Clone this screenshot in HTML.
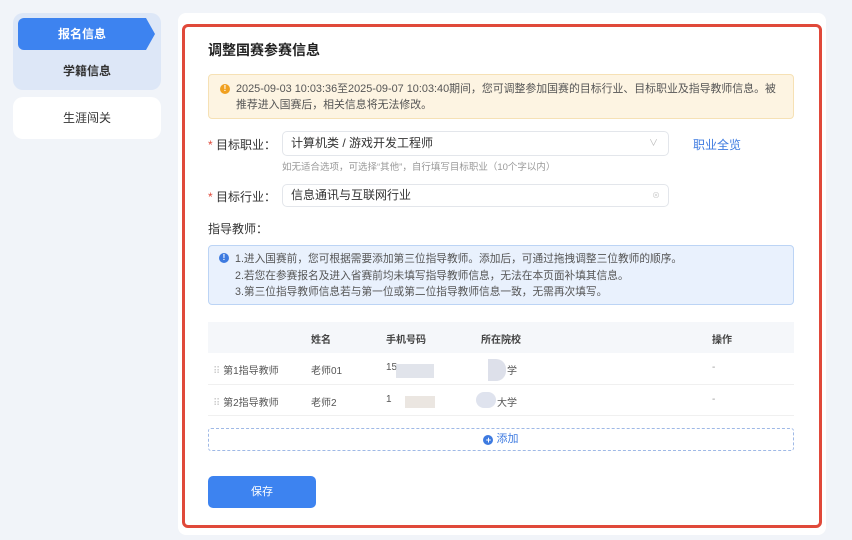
<!DOCTYPE html>
<html><head><meta charset="utf-8"><style>
*{box-sizing:border-box;margin:0;padding:0}
body{width:852px;height:540px;background:#f1f4f9;font-family:"Liberation Sans","Noto Sans CJK SC",sans-serif;position:relative;overflow:hidden;color:#333}
.abs{position:absolute}
.grp{left:13px;top:13px;width:148px;height:77px;background:#dde7f7;border-radius:10px}
.act{left:18px;top:18px;width:128px;height:32px;background:#3d83f0;border-radius:6px 0 0 6px;color:#fff;font-size:12px;font-weight:bold;text-align:center;line-height:32px}
.arr{left:146px;top:18px;width:0;height:0;border-top:16px solid transparent;border-bottom:16px solid transparent;border-left:9px solid #3d83f0}
.card2{left:13px;top:97px;width:148px;height:42px;background:#fff;border-radius:10px;font-size:12px;text-align:center;line-height:42px}
.main{left:178px;top:13px;width:648px;height:522px;background:#fff;border-radius:8px}
.red{left:182px;top:24px;width:640px;height:504px;border:3px solid #e0493a;border-radius:6px}
.t{font-size:12px;white-space:nowrap}
.sel{background:#fff;border:1px solid #e3e6eb;border-radius:5px;font-size:12px;padding-left:8px;color:#333}
</style></head><body>
<div class="abs grp"></div>
<div class="abs act">报名信息</div>
<div class="abs arr"></div>
<div class="abs t" style="left:13px;width:148px;text-align:center;top:62px;font-weight:bold">学籍信息</div>
<div class="abs card2">生涯闯关</div>
<div class="abs main"></div>
<div class="abs red"></div>
<div class="abs" style="left:208px;top:40px;font-size:14px;font-weight:bold;color:#222">调整国赛参赛信息</div>
<div class="abs" style="left:208px;top:74px;width:586px;height:45px;background:#fdf4e2;border:1px solid #f6e1b5;border-radius:4px"></div>
<div class="abs" style="left:220px;top:84px;width:10px;height:10px;border-radius:50%;background:#f0a020;color:#fff;font-size:8px;text-align:center;line-height:10px;font-weight:bold">!</div>
<div class="abs" style="left:236px;top:81px;font-size:10.9px;line-height:16px;color:#555;white-space:nowrap">2025-09-03 10:03:36至2025-09-07 10:03:40期间，您可调整参加国赛的目标行业、目标职业及指导教师信息。被<br>推荐进入国赛后，相关信息将无法修改。</div>
<div class="abs t" style="left:208px;top:136px"><span style="color:#e0493a">*</span> 目标职业：</div>
<div class="abs sel" style="left:282px;top:131px;width:387px;height:25px;line-height:23px">计算机类 / 游戏开发工程师<span style="position:absolute;right:10px;color:#bbb;font-size:9px">∨</span></div>
<div class="abs" style="left:693px;top:136px;font-size:12px;color:#3d7ae0">职业全览</div>
<div class="abs" style="left:282px;top:159px;font-size:9.5px;color:#999">如无适合选项，可选择“其他”，自行填写目标职业（10个字以内）</div>
<div class="abs t" style="left:208px;top:188px"><span style="color:#e0493a">*</span> 目标行业：</div>
<div class="abs sel" style="left:282px;top:184px;width:387px;height:23px;line-height:21px">信息通讯与互联网行业<span style="position:absolute;right:8px;color:#ccc;font-size:8px">⊗</span></div>
<div class="abs t" style="left:208px;top:220px">指导教师：</div>
<div class="abs" style="left:208px;top:245px;width:586px;height:60px;background:#e9f1fd;border:1px solid #bcd4f5;border-radius:4px"></div>
<div class="abs" style="left:219px;top:253px;width:10px;height:10px;border-radius:50%;background:#3d7ae0;color:#fff;font-size:8px;text-align:center;line-height:10px;font-weight:bold">!</div>
<div class="abs" style="left:235px;top:251px;font-size:10.7px;white-space:nowrap;line-height:16.5px;color:#555">1.进入国赛前，您可根据需要添加第三位指导教师。添加后，可通过拖拽调整三位教师的顺序。<br>2.若您在参赛报名及进入省赛前均未填写指导教师信息，无法在本页面补填其信息。<br>3.第三位指导教师信息若与第一位或第二位指导教师信息一致，无需再次填写。</div>
<div class="abs" style="left:208px;top:322px;width:586px;height:31px;background:#f5f7fa"></div>
<div class="abs" style="left:208px;top:384px;width:586px;height:1px;background:#f0f0f0"></div>
<div class="abs" style="left:208px;top:415px;width:586px;height:1px;background:#f0f0f0"></div>
<div class="abs" style="top:331px;left:311px;font-size:10px;font-weight:bold;color:#444">姓名</div>
<div class="abs" style="top:331px;left:386px;font-size:10px;font-weight:bold;color:#444">手机号码</div>
<div class="abs" style="top:331px;left:481px;font-size:10px;font-weight:bold;color:#444">所在院校</div>
<div class="abs" style="top:331px;left:712px;font-size:10px;font-weight:bold;color:#444">操作</div>
<div class="abs" style="top:362px;left:213px;font-size:10px;color:#555"><span style="color:#ccc">⠿</span> 第1指导教师</div>
<div class="abs" style="top:362px;left:311px;font-size:10px;color:#555">老师01</div>
<div class="abs" style="top:362px;left:386px;font-size:10px;color:#555">15</div>
<div class="abs" style="top:364px;left:396px;width:38px;height:14px;background:#d4d9e2;opacity:.7"></div>
<div class="abs" style="top:359px;left:488px;width:18px;height:22px;background:#dde0ea;border-radius:0 10px 10px 0"></div>
<div class="abs" style="top:362px;left:507px;font-size:10px;color:#555">学</div>
<div class="abs" style="top:362px;left:712px;font-size:10px;color:#999">-</div>
<div class="abs" style="top:394px;left:213px;font-size:10px;color:#555"><span style="color:#ccc">⠿</span> 第2指导教师</div>
<div class="abs" style="top:394px;left:311px;font-size:10px;color:#555">老师2</div>
<div class="abs" style="top:394px;left:386px;font-size:10px;color:#555">1</div>
<div class="abs" style="top:396px;left:405px;width:30px;height:12px;background:#e6e0da;opacity:.8"></div>
<div class="abs" style="top:392px;left:476px;width:20px;height:16px;background:#dfe3ee;border-radius:8px"></div>
<div class="abs" style="top:394px;left:497px;font-size:10px;color:#555">大学</div>
<div class="abs" style="top:394px;left:712px;font-size:10px;color:#999">-</div>
<div class="abs" style="left:208px;top:428px;width:586px;height:23px;border:1px dashed #9fb9e6;border-radius:3px;text-align:center;font-size:11px;color:#3d7ae0;line-height:21px"><span style="display:inline-block;width:10px;height:10px;border-radius:50%;background:#3d7ae0;color:#fff;font-size:9px;line-height:10px;vertical-align:-1px;font-weight:bold">+</span> 添加</div>
<div class="abs" style="left:208px;top:476px;width:108px;height:32px;background:#3d83f0;border-radius:5px;color:#fff;font-size:11px;text-align:center;line-height:32px">保存</div>
</body></html>
